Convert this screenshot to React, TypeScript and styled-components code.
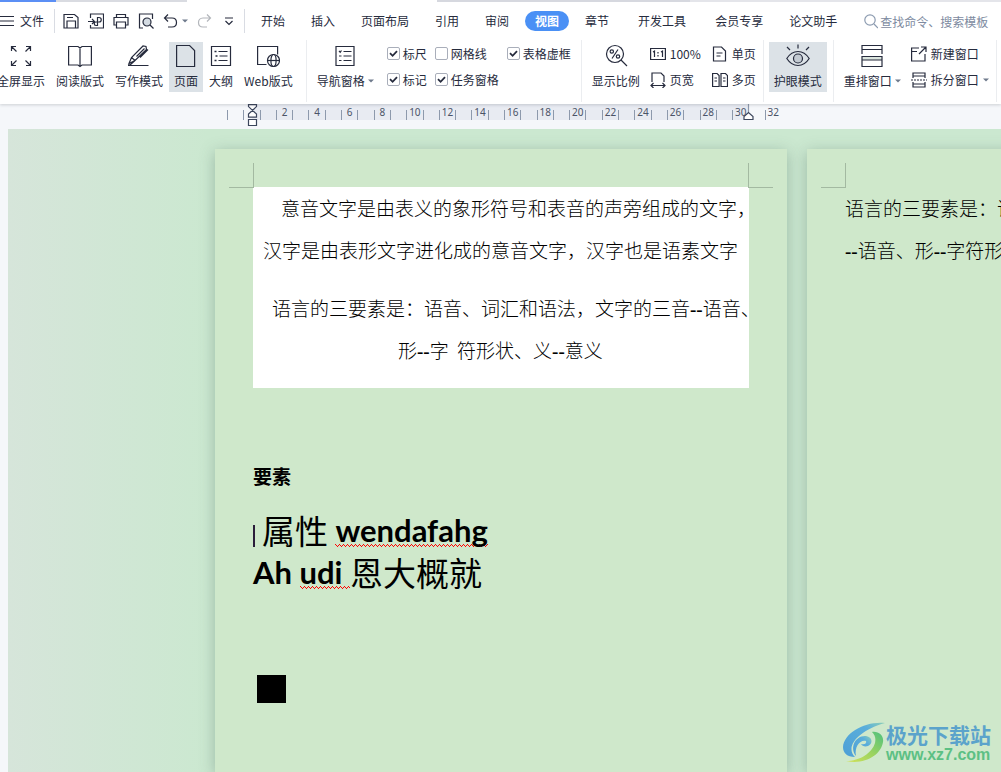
import React from 'react';
import styled, { createGlobalStyle, css } from 'styled-components';

const ink = '#262b3d';

const GlobalStyle = createGlobalStyle`
  * { box-sizing: border-box; }
  body {
    margin: 0;
    overflow: hidden;
    background: #f5f7fa;
    color: ${ink};
    font: 12px/16px "Noto Sans CJK SC", sans-serif;
  }
  button, input { font: inherit; color: inherit; }
  button { border: 0; padding: 0; background: none; cursor: pointer; white-space: nowrap; }
  svg { display: block; flex: none; }
`;

const Shell = styled.div`
  position: relative;
  display: flex;
  flex-direction: column;
  min-height: 100vh;
  overflow: hidden;
`;

const Header = styled.header`
  position: relative;
  z-index: 1;
  background: #fff;
  box-shadow: 0 1px 3px rgba(40, 50, 60, 0.2);
`;

const TabStrip = styled.div`
  display: flex;
  height: 2px;
`;

const StripTab = styled.span<{ $color: string; $width?: number }>`
  background: ${p => p.$color};
  ${p => (p.$width ? css`width: ${p.$width}px;` : css`flex: 1;`)}
`;

const MenuBar = styled.nav`
  display: flex;
  align-items: center;
  height: 38px;
  overflow: hidden;
`;

const FileButton = styled.button`
  display: flex;
  flex: none;
  align-items: center;
  gap: 6px;
  width: 54px;
  height: 28px;
`;

const Rule = styled.span<{ $tall?: boolean }>`
  flex: none;
  width: 1px;
  height: ${p => (p.$tall ? 62 : 24)}px;
  margin: ${p => (p.$tall ? '0 5px 0 6px' : '0')};
  background: ${p => (p.$tall ? '#ebedf0' : '#d9dce3')};
`;

const QuickBar = styled.div`
  display: flex;
  flex: none;
  align-items: center;
  gap: 9px;
  width: 189px;
  padding-left: 8px;
`;

const QuickButton = styled.button`
  display: flex;
  align-items: center;
  gap: 4px;
  height: 24px;
`;

const Tabs = styled.div`
  display: flex;
  flex: none;
  align-items: center;
  padding-left: 3px;
`;

const Tab = styled.button<{ $active?: boolean; $roomy?: boolean }>`
  height: 20px;
  margin: 0 ${p => (p.$roomy ? 6 : 3)}px;
  padding: 0 10px;
  border-radius: 10px;
  ${p => p.$active && css`
    background: #4a90f5;
    color: #fff;
    font-weight: 700;
  `}
`;

const Search = styled.label`
  display: flex;
  align-items: center;
  flex: 1;
  gap: 2px;
  min-width: 0;
  margin-left: 14px;
`;

const SearchInput = styled.input`
  flex: 1;
  min-width: 0;
  height: 20px;
  padding: 0;
  border: 0;
  outline: 0;
  background: none;
  &::placeholder { color: #7d8aa0; opacity: 1; }
`;

const Ribbon = styled.div`
  display: flex;
  align-items: center;
  height: 64px;
  padding-bottom: 3px;
  margin-left: -8px;
`;

const Group = styled.div`
  display: flex;
  flex: none;
  align-items: center;
  gap: 1px;
`;

const BigButton = styled.button<{ $active?: boolean }>`
  display: flex;
  flex-direction: column;
  align-items: center;
  gap: 3px;
  height: 50px;
  margin-bottom: 8px;
  padding: 2px 5px 0;
  background: ${p => (p.$active ? '#dce2e7' : 'transparent')};
`;

const Label = styled.span`
  display: flex;
  align-items: center;
  gap: 3px;
  height: 20px;
`;

const SmallGrid = styled.div<{ $columns: number; $gap: number }>`
  display: grid;
  grid-template-columns: repeat(${p => p.$columns}, max-content);
  grid-auto-rows: 26px;
  column-gap: ${p => p.$gap}px;
  align-items: center;
  margin-bottom: 8px;
`;

const Check = styled.label`
  display: flex;
  align-items: center;
  gap: 3px;
`;

const CheckBox = styled.input`
  appearance: none;
  flex: none;
  width: 13px;
  height: 13px;
  margin: 0;
  border: 1px solid #a9aeba;
  border-radius: 2px;
  background: #fff;
  &:checked {
    background: #fff url("data:image/svg+xml,%3Csvg xmlns='http://www.w3.org/2000/svg' viewBox='0 0 11 11'%3E%3Cpath d='M2 5.2l2.6 2.6L9 3.2' fill='none' stroke='%23262b3d' stroke-width='1.8'/%3E%3C/svg%3E");
  }
`;

const SmallButton = styled.button`
  display: flex;
  align-items: center;
  gap: 4px;
`;

const ViewGroup = styled(Group)`
  padding-right: 2px;
`;

const CheckGroup = styled(Group)`
  padding: 0 4px 0 8px;
`;

const PadGroup = styled(Group)`
  gap: 5px;
  padding-right: 1px;
`;

const RulerBar = styled.div`
  position: relative;
  height: 25px;
  padding-left: 227px;
`;

const RulerTrack = styled.div`
  display: grid;
  grid-template-columns: repeat(34, 1fr);
  width: 554px;
  height: 16px;
  padding-top: 6px;
  background: linear-gradient(to right, transparent 25px, #e8ebf2 25px, #e8ebf2 522px, transparent 522px);
`;

const Tick = styled.span`
  height: 10px;
  border-left: 1px solid #8d99ac;
  color: #4b5468;
  font: 10px/5px "Noto Sans", sans-serif;
  text-align: center;
  white-space: nowrap;
`;

const Marker = styled.span<{ $x: number }>`
  position: absolute;
  top: 0;
  left: ${p => p.$x}px;
`;

const Workspace = styled.main`
  display: flex;
  flex: 1;
  gap: 20px;
  margin-left: 8px;
  padding: 20px 0 0 207px;
  overflow: hidden;
  background: linear-gradient(to right, #d6e5da, #cbe8d0 200px);
`;

const Page = styled.article`
  position: relative;
  flex: none;
  width: 572px;
  padding: 38px;
  background: #cfe8cb;
  box-shadow: 0 3px 14px rgba(70, 100, 90, 0.36);
  color: #000;
`;

const Corner = styled.span<{ $right?: boolean }>`
  position: absolute;
  top: 14px;
  width: 25px;
  height: 25px;
  border-bottom: 1px solid #a3b9a1;
  ${p => (p.$right
    ? css`right: 14px; border-left: 1px solid #a3b9a1;`
    : css`left: 14px; border-right: 1px solid #a3b9a1;`)}
`;

const Sheet = styled.section`
  display: flex;
  flex-direction: column;
  gap: 16px;
  padding-bottom: 17px;
  overflow: hidden;
  background: #fff;
`;

const Line = styled.p<{ $indent?: number }>`
  margin: 0;
  padding-left: ${p => p.$indent ?? 0}px;
  font: 300 19px/42px "Noto Sans CJK SC", sans-serif;
  white-space: pre;
`;

const Dash = styled.b`
  font: 700 19px/1 "Liberation Serif", serif;
`;

const SubHeading = styled.h3`
  margin: 73px 0 18px;
  font: 700 19px/30px "Noto Sans CJK SC", sans-serif;
`;

const Heading = styled.h2`
  display: flex;
  align-items: center;
  margin: 0;
  height: 42px;
  font: 400 33px/42px "Noto Sans CJK SC", sans-serif;
  white-space: pre;
`;

const Caret = styled.span`
  width: 2px;
  height: 22px;
  margin: 12px 7px 0 0;
  background: #2b1d3a;
`;

const Latin = styled.span<{ $wave?: boolean }>`
  font: 700 31px/34px Lato, sans-serif;
  ${p => p.$wave && css`
    background: url("data:image/svg+xml,%3Csvg xmlns='http://www.w3.org/2000/svg' width='4' height='3' fill='%23f00' shape-rendering='crispEdges'%3E%3Cpath d='M0 0h1v1H0zM1 1h1v1H1zM2 2h1v1H2zM3 1h1v1H3z'/%3E%3C/svg%3E") repeat-x bottom left;
  `}
`;

const Block = styled.div`
  width: 29px;
  height: 28px;
  margin: 82px 0 0 4px;
  background: #000;
`;

const Watermark = styled.a`
  position: absolute;
  right: 10px;
  bottom: 8px;
  z-index: 1;
  display: flex;
  align-items: center;
  text-decoration: none;
`;

const MarkText = styled.span`
  display: flex;
  flex-direction: column;
  color: #5ba3cb;
  font: 700 21px/24px "Noto Sans CJK SC", sans-serif;
`;

const MarkUrl = styled.span`
  color: #5cc084;
  font: 700 16px/18px "Liberation Sans", sans-serif;
`;

type IconProps = { w?: number; h?: number; children: React.ReactNode };
const Icon = ({ w = 16, h = 16, children }: IconProps) => (
  <svg width={w} height={h} viewBox={`0 0 ${w} ${h}`} fill="none" stroke={ink} strokeWidth="1.2" aria-hidden="true">
    {children}
  </svg>
);

const Down = () => (
  <svg width="6" height="4" viewBox="0 0 6 4" fill="#6f7a8c" aria-hidden="true"><path d="M0 .5h6L3 3.5z" /></svg>
);

const big = {
  full: <path d="M7.500 7.500L2.500 2.500M2.500 7V2.500H7M16.500 7.500l5-5M17 2.500h4.500V7M7.500 16.500l-5 5M2.500 17v4.500H7M16.500 16.500l5 5M17 21.500h4.500V17" />,
  read: <path d="M.6 2.500h9.400l2 1.500 2-1.500h9.400v18.500H14l-2 1.500-2-1.500H.6zM12 4v18" />,
  write: <path d="M2 19.500l2.500-6L16 2l3 .5.5 3L8 16.500zM4.500 13.500L8 16.500M9.500 12.500l8-8M13 13.500l8-8M8 16.500L3 21M1 21.500h20.500M2 19.500v2" />,
  page: <path d="M2.600 1.500h13l5 5v16h-18z" />,
  outline: <><path d="M2.500 2.500h19v19h-19zM9.500 7.500h9M10.500 12h8M9.500 16.500h9" /><path d="M5.500 7.500h2M6.500 12h2M5.500 16.500h2" strokeWidth="1.600" /></>,
  web: <><path d="M10.500 20.500H1.600V2.500h20v8" /><circle cx="17.500" cy="16.500" r="6" /><ellipse cx="17.500" cy="16.500" rx="2.600" ry="6" /><path d="M11.500 16.500h12" /></>,
  nav: <><path d="M3 2.500h18v19H3zM10.500 7.500h8M10.500 12h8M10.500 16.500h8" /><path d="M6 6.800l1.200 1.400L8.500 6.500M6 12h2.500M6 16.500h2.500" /></>,
  ratio: <><circle cx="11" cy="10" r="8.500" /><path d="M17 16l6 6M14 5.500l-6 9" /><circle cx="7.800" cy="7.500" r="1.700" /><circle cx="14" cy="12.500" r="1.700" /></>,
  eye: <><path d="M.8 14.500C4 9.500 8 7.500 12 7.500s8 2 11.200 7C20 19.500 16 21.500 12 21.500s-8-2-11.200-7zM12 .5v4M1 3l3 3M23 3l-3 3" /><circle cx="12" cy="14.500" r="4.500" fill="#c3cad2" /></>,
  arrange: <><path d="M2 13h20v3H2z" fill="#dbe5de" stroke="none" /><path d="M2 10V1.500h20V10M2 5.500h20M2 12.500h20v10H2zM2 16h20" /></>,
};

type BigProps = { icon: keyof typeof big; label: string; active?: boolean; menu?: boolean };
const Big = ({ icon, label, active, menu }: BigProps) => (
  <BigButton $active={active} aria-pressed={active}>
    <Icon w={24} h={24}>{big[icon]}</Icon>
    <Label>{label}{menu && <Down />}</Label>
  </BigButton>
);

const Box = ({ label, on = true }: { label: string; on?: boolean }) => (
  <Check><CheckBox type="checkbox" defaultChecked={on} />{label}</Check>
);

const tabs = ['开始', '插入', '页面布局', '引用', '审阅', '视图', '章节', '开发工具', '会员专享', '论文助手'];

const tickLabels = Array.from({ length: 34 }, (_, i) => {
  const n = i - 1;
  return n >= 2 && n % 2 === 0 ? String(n) : '';
});

export default function App() {
  return (
    <Shell>
      <GlobalStyle />
      <Header>
        <TabStrip>
          <StripTab $color="#5b8ff5" $width={56} />
          <StripTab $color="#d9dbe1" $width={131} />
          <StripTab $color="#ffffff" $width={250} />
          <StripTab $color="#d6d8df" $width={253} />
          <StripTab $color="#e4e5ea" />
        </TabStrip>
        <MenuBar>
          <FileButton>
            <Icon w={14}><path d="M0 3.500h14M0 8h14M0 12.500h14" /></Icon>
            文件
          </FileButton>
          <Rule />
          <QuickBar>
            <QuickButton aria-label="保存">
              <Icon><path d="M1 1.500h10.500l3.500 3V15H1zM4 15V8h8.500v7M4 4.500h6" /></Icon>
            </QuickButton>
            <QuickButton aria-label="输出">
              <Icon><path d="M2.500 5V1h13v14h-13v-3M0 8.500h6M4 6l2.500 2.500L4 11M8 12.500h1.500v-8h1.500a2 2 0 010 4.500H8a1.500 1.500 0 000 3.500" /></Icon>
            </QuickButton>
            <QuickButton aria-label="打印">
              <Icon><path d="M3.500 4.500V1.500h9v3M3.500 12H1V4.500h14V12h-2.500M3.500 9h9v6h-9z" /></Icon>
            </QuickButton>
            <QuickButton aria-label="打印预览">
              <Icon><path d="M5 15H1.500V1h13v5" /><circle cx="9" cy="9" r="4" fill="#d4dbe2" /><path d="M12 12l3.500 3.500" /></Icon>
            </QuickButton>
            <QuickButton aria-label="撤销">
              <Icon w={15}><path d="M5 1.500L1.500 5 5 8.500M1.500 5H9c6 0 6 9 0 9H5" /></Icon>
              <Down />
            </QuickButton>
            <QuickButton aria-label="恢复">
              <svg width="15" height="16" viewBox="0 0 15 16" fill="none" stroke="#b3b6bb" strokeWidth="1.200"><path d="M10 1.500L13.500 5 10 8.500M13.500 5H6c-6 0-6 9 0 9h4" /></svg>
            </QuickButton>
            <QuickButton aria-label="自定义快速访问工具栏">
              <Icon w={16}><path d="M4 5h8M4.500 8l3.500 3.500L11.500 8" /></Icon>
            </QuickButton>
          </QuickBar>
          <Rule />
          <Tabs>
            {tabs.map(t => (
              <Tab key={t} $active={t === '视图'} $roomy={t === '开发工具'}>{t}</Tab>
            ))}
          </Tabs>
          <Search>
            <svg width="14" height="16" viewBox="0 0 14 16" fill="none" stroke="#8c9bb0" strokeWidth="1.200"><circle cx="6" cy="7" r="5.200" /><path d="M10 11l4 4" /></svg>
            <SearchInput aria-label="搜索" placeholder="查找命令、搜索模板" />
          </Search>
        </MenuBar>
        <Ribbon>
          <ViewGroup>
            <Big icon="full" label="全屏显示" />
            <Big icon="read" label="阅读版式" />
            <Big icon="write" label="写作模式" />
            <Big icon="page" label="页面" active />
            <Big icon="outline" label="大纲" />
            <Big icon="web" label="Web版式" />
          </ViewGroup>
          <Rule $tall />
          <Group><Big icon="nav" label="导航窗格" menu /></Group>
          <CheckGroup>
            <SmallGrid $columns={3} $gap={8}>
              <Box label="标尺" />
              <Box label="网格线" on={false} />
              <Box label="表格虚框" />
              <Box label="标记" />
              <Box label="任务窗格" />
            </SmallGrid>
          </CheckGroup>
          <Rule $tall />
          <PadGroup>
            <Big icon="ratio" label="显示比例" />
            <SmallGrid $columns={2} $gap={11}>
              <SmallButton><Icon><path d="M.6 2.500h14.800v11H.6zM3 6l1.500-1v6M11 6l1.500-1v6M8 6v1.500M8 9v1.500" /></Icon>100%</SmallButton>
              <SmallButton><Icon><path d="M1.500 1h8l4 4v10h-12zM4.500 7h6M4.500 10h4" /></Icon>单页</SmallButton>
              <SmallButton><Icon><path d="M2 10V1h9l3 3v6M1 13.500h14M3.500 11L1 13.500 3.500 16M12.500 11l2.500 2.500-2.500 2.500" /></Icon>页宽</SmallButton>
              <SmallButton><Icon><path d="M.6 1.500h4.500l2 2v11H.6zM9 1.500h4.500l2 2v11H9zM2.500 6h2.500M2.500 9h2.500M11 6h2.500M11 9h2.500" /></Icon>多页</SmallButton>
            </SmallGrid>
          </PadGroup>
          <Rule $tall />
          <Group><Big icon="eye" label="护眼模式" active /></Group>
          <Rule $tall />
          <PadGroup>
            <Big icon="arrange" label="重排窗口" menu />
            <SmallGrid $columns={1} $gap={0}>
              <SmallButton><Icon><path d="M8 2H.6v13H14V8M.6 5.500H6M8 8l7-7M10 1h5v5" /></Icon>新建窗口</SmallButton>
              <SmallButton>
                <Icon><path d="M2 6V1h12v5M2 4h12M2 10v5h12v-5M2 12h12" /><path d="M0 8h16" strokeDasharray="2 1" /></Icon>
                拆分窗口<Down />
              </SmallButton>
            </SmallGrid>
          </PadGroup>
          <Rule $tall />
        </Ribbon>
      </Header>

      <RulerBar>
        <RulerTrack>
          {tickLabels.map((label, i) => <Tick key={i}>{label}</Tick>)}
        </RulerTrack>
        <Marker $x={247}>
          <svg width="11" height="22" viewBox="0 0 11 22" fill="#fff" stroke="#3c465c" strokeWidth="1.200"><path d="M1.500.6h8v2l-8 7.500v3h8v-3l-8-7.500zM1.500 15.500h8v6h-8z" /></svg>
        </Marker>
        <Marker $x={743}>
          <svg width="11" height="22" viewBox="0 0 11 22" fill="#fff" stroke="#3c465c" strokeWidth="1.200"><path d="M5.500 0v8" stroke="#8d99ac" /><path d="M1 15.500v-3l4.500-4 4.500 4v3z" /></svg>
        </Marker>
      </RulerBar>

      <Workspace>
        <Page>
          <Corner />
          <Corner $right />
          <Sheet>
            <div>
              <Line $indent={28}>意音文字是由表义的象形符号和表音的声旁组成的文字，</Line>
              <Line $indent={10}>汉字是由表形文字进化成的意音文字，汉字也是语素文字</Line>
            </div>
            <div>
              <Line $indent={19}>语言的三要素是：语音、词汇和语法，文字的三音<Dash>--</Dash>语音、</Line>
              <Line $indent={145}>形<Dash>--</Dash>字{'  '}符形状、义<Dash>--</Dash>意义</Line>
            </div>
          </Sheet>
          <SubHeading>要素</SubHeading>
          <Heading><Caret />属性 <Latin $wave>wendafahg</Latin></Heading>
          <Heading><Latin>Ah </Latin><Latin $wave>udi </Latin>恩大概就</Heading>
          <Block />
        </Page>
        <Page>
          <Corner />
          <Line>语言的三要素是：语音、词汇和语法</Line>
          <Line><Dash>--</Dash>语音、形<Dash>--</Dash>字符形状、义</Line>
        </Page>
      </Workspace>

      <Watermark href="#">
        <svg width="43" height="42" viewBox="0 0 43 42" aria-hidden="true">
          <defs>
            <linearGradient id="swooshBlue" x1="0" y1="1" x2="1" y2="0"><stop offset="0" stopColor="#4d9fd6" /><stop offset="0.7" stopColor="#5aaedb" /><stop offset="1" stopColor="#8ccfb8" /></linearGradient>
            <linearGradient id="swooshGreen" x1="0" y1="1" x2="1" y2="0"><stop offset="0" stopColor="#d3e25a" /><stop offset="0.5" stopColor="#9ad35f" /><stop offset="1" stopColor="#4fc07f" /></linearGradient>
          </defs>
          <path d="M42 1C22-1 1 11 0 25c0 6 4 10 12 10C1 24 17 8 42 1z" fill="url(#swooshBlue)" />
          <path d="M13 34C6 25 13 13 23 14c7 1 7 8 2 10-3 1-6 0-7-2 4 1 6-1 5-3-5-2-12 5-10 15z" fill="url(#swooshBlue)" />
          <path d="M29 10c7-1 12 4 11 10C38 33 22 43 3 39c14 0 26-8 29-18 1-5 0-8-3-11z" fill="url(#swooshGreen)" />
        </svg>
        <MarkText>极光下载站<MarkUrl>www.xz7.com</MarkUrl></MarkText>
      </Watermark>
    </Shell>
  );
}
